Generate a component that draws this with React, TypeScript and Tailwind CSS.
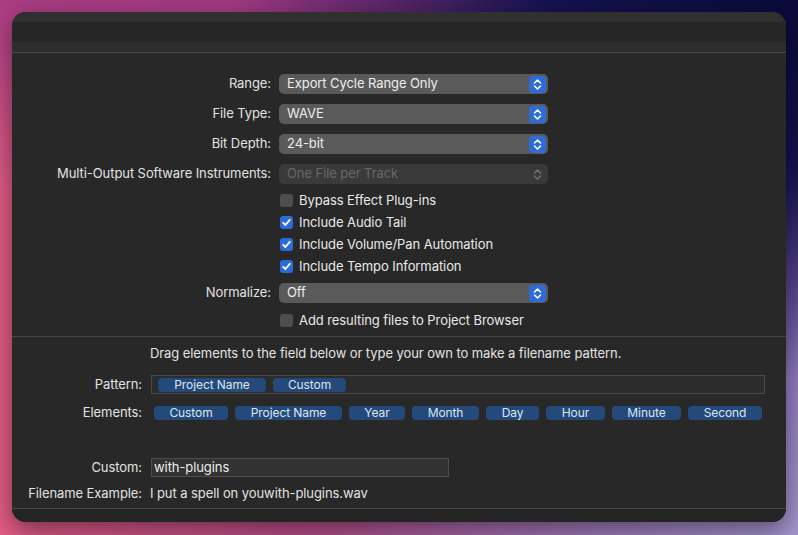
import React from "react";

const font = "font-['Inter','Liberation_Sans',sans-serif]";

type PopupProps = {
   value: string;
   disabled?: boolean;
};

const Stepper: React.FC<{ disabled?: boolean }> = ({ disabled }) => (
   <div
      className={`w-[17px] h-[17px] rounded-[4px] flex items-center justify-center ${
         disabled ? "bg-transparent" : "bg-[#2c6bd8]"
      }`}
   >
      <svg width="17" height="17" viewBox="0 0 17 17" fill="none">
         <path
            d="M5.5 7 L8.5 4 L11.5 7 M5.5 10 L8.5 13 L11.5 10"
            stroke={disabled ? "#6e6e6e" : "#ffffff"}
            strokeWidth="1.6"
            strokeLinecap="round"
            strokeLinejoin="round"
         />
      </svg>
   </div>
);

const Popup: React.FC<PopupProps> = ({ value, disabled }) => (
   <div
      className={`w-[269px] h-[20px] rounded-[5px] flex items-center justify-between pl-[8px] pr-[2px] ${
         disabled ? "bg-[#3a3a3a] text-[#686868]" : "bg-[#5a5a5a] text-[#ededed]"
      }`}
   >
      <span>{value}</span>
      <Stepper disabled={disabled} />
   </div>
);

const Checkbox: React.FC<{ checked?: boolean; label: string; h?: string }> = ({ checked, label, h = "h-[22px]" }) => (
   <div className={`${h} flex items-center pl-[268px] pt-[1px]`}>
      <div
         className={`w-[13px] h-[13px] rounded-[3px] flex items-center justify-center ${
            checked ? "bg-[#2b6ad8]" : "bg-[#4e4e4e]"
         }`}
      >
         {checked && (
            <svg width="11" height="11" viewBox="0 0 11 11" fill="none">
               <path d="M2.2 5.8 L4.4 8 L8.8 2.8" stroke="#fff" strokeWidth="1.8" strokeLinecap="round" strokeLinejoin="round" />
            </svg>
         )}
      </div>
      <span className="ml-[6px] text-[#e8e8e8]">{label}</span>
   </div>
);

const FormRow: React.FC<{ label: string; children: React.ReactNode; h?: string }> = ({ label, children, h = "h-[30px]" }) => (
   <div className={`${h} flex items-center`}>
      <div className="w-[259px] text-right text-[#e2e2e2]">{label}</div>
      <div className="ml-[8px]">{children}</div>
   </div>
);

const Token: React.FC<{ label: string; w: string }> = ({ label, w }) => (
   <div className={`${w} h-[14px] rounded-[4px] bg-[#234a7b] text-[#dde5ef] text-[12px] leading-[14px] text-center`}>
      {label}
   </div>
);

const elements = [
   { label: "Custom", w: "w-[74px]" },
   { label: "Project Name", w: "w-[107px]" },
   { label: "Year", w: "w-[56px]" },
   { label: "Month", w: "w-[67px]" },
   { label: "Day", w: "w-[53px]" },
   { label: "Hour", w: "w-[59px]" },
   { label: "Minute", w: "w-[69px]" },
   { label: "Second", w: "w-[74px]" },
];

export default function App() {
   return (
      <div
         className={`${font} w-[798px] h-[535px] overflow-hidden pt-[12px] pl-[12px] text-[13px] tracking-[-0.08px] bg-[radial-gradient(ellipse_at_100%_0%,#0a0a3c_0%,#15124e_22%,transparent_50%),radial-gradient(ellipse_at_100%_100%,#a594cc_0%,transparent_45%),linear-gradient(180deg,rgba(150,50,130,0.75)_0%,transparent_35%),linear-gradient(90deg,#e25c86_0%,#b24a86_45%,#7a5eb0_100%)]`}
      >
         <div className="w-[774px] h-[510px] rounded-[14px] overflow-hidden bg-[#282828] flex flex-col shadow-[0_8px_24px_rgba(0,0,0,0.45)]">
            {/* title area */}
            <div className="h-[10px] bg-[#303030]" />
            <div className="h-[20px] bg-[#262626]" />
            <div className="h-[10px] bg-[#2e2e2e]" />
            <div className="h-[1px] bg-[#474747]" />

            {/* export settings */}
            <div className="pt-[16px] pb-[5px]">
               <FormRow label="Range:">
                  <Popup value="Export Cycle Range Only" />
               </FormRow>
               <FormRow label="File Type:">
                  <Popup value="WAVE" />
               </FormRow>
               <FormRow label="Bit Depth:">
                  <Popup value="24-bit" />
               </FormRow>
               <FormRow label="Multi-Output Software Instruments:">
                  <Popup value="One File per Track" disabled />
               </FormRow>
               <Checkbox label="Bypass Effect Plug-ins" />
               <Checkbox label="Include Audio Tail" checked />
               <Checkbox label="Include Volume/Pan Automation" checked />
               <Checkbox label="Include Tempo Information" checked />
               <FormRow label="Normalize:" h="h-[32px]">
                  <Popup value="Off" />
               </FormRow>
               <Checkbox label="Add resulting files to Project Browser" />
            </div>
            <div className="h-[1px] bg-[#444444]" />

            {/* filename pattern */}
            <div className="flex flex-col text-[#e2e2e2]">
               <div className="mt-[8px] h-[18px] flex items-center pl-[138px]">
                  Drag elements to the field below or type your own to make a filename pattern.
               </div>
               <div className="mt-[12px] h-[19px] flex items-center">
                  <div className="w-[130px] text-right">Pattern:</div>
                  <div className="ml-[9px] w-[614px] h-[19px] border border-[#4a4a4a] bg-[#2c2c2c] flex items-center pl-[6px] gap-[7px]">
                     <Token label="Project Name" w="w-[108px]" />
                     <Token label="Custom" w="w-[73px]" />
                  </div>
               </div>
               <div className="mt-[11px] h-[15px] flex items-center">
                  <div className="w-[130px] text-right">Elements:</div>
                  <div className="ml-[12px] flex gap-[7px]">
                     {elements.map((e) => (
                        <Token key={e.label} label={e.label} w={e.w} />
                     ))}
                  </div>
               </div>
               <div className="mt-[38px] h-[19px] flex items-center">
                  <div className="w-[130px] text-right">Custom:</div>
                  <div className="ml-[9px] w-[298px] h-[19px] border border-[#4c4c4c] bg-[#323232] flex items-center pl-[2px] text-[#ededed]">
                     with-plugins
                  </div>
               </div>
               <div className="mt-[9px] h-[16px] flex items-center">
                  <div className="w-[130px] text-right">Filename Example:</div>
                  <div className="ml-[8px]">I put a spell on youwith-plugins.wav</div>
               </div>
            </div>
            <div className="mt-[6px] h-[1px] bg-[#464646]" />
            <div className="flex-1 bg-[#242424]" />
         </div>
      </div>
   );
}
